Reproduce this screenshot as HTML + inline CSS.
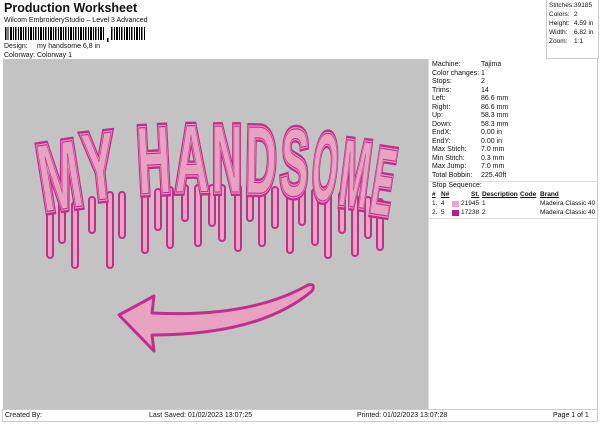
<!DOCTYPE html>
<html><head><meta charset="utf-8"><style>
*{margin:0;padding:0;box-sizing:border-box}
body{width:600px;height:424px;background:#fff;position:relative;overflow:hidden;font-family:"Liberation Sans",sans-serif;color:#111}
.a{position:absolute;white-space:nowrap}
.s{font-size:7px}
#canvas{position:absolute;left:3px;top:59px;width:425px;height:350px;background:#c3c3c3}
#panel{position:absolute;left:428px;top:59px;width:170px;height:350px;border-left:1px solid #ddd;border-right:1px solid #ccc}
#stats{position:absolute;left:546px;top:0;width:53px;height:59px;border:1px solid #ccc;border-top:none}
#foot{position:absolute;left:2px;top:409px;width:596px;height:13px;border:1px solid #ccc}
.r{position:absolute;left:3px;font-size:7px;white-space:nowrap}
.v{position:absolute;left:52px;font-size:7px;white-space:nowrap}
#stats .r{font-size:6.5px}
#tbl .r{font-size:6.5px}
</style></head><body>
<div class="a" style="left:4px;top:1px;font-size:12.5px;font-weight:bold">Production Worksheet</div>
<div class="a s" style="left:4px;top:17px">Wilcom EmbroideryStudio – Level 3 Advanced</div>
<svg class="a" style="left:4px;top:27px" width="142" height="16">
<g fill="#000">
<rect x="1" y="0" width="1.5" height="13"/><rect x="3.5" y="0" width="1" height="13"/><rect x="6" y="0" width="2" height="13"/><rect x="9" y="0" width="1" height="13"/><rect x="11" y="0" width="1.5" height="13"/><rect x="14" y="0" width="1" height="13"/><rect x="16" y="0" width="2" height="13"/><rect x="19" y="0" width="1" height="13"/><rect x="21" y="0" width="1.5" height="13"/><rect x="24" y="0" width="1" height="13"/><rect x="26" y="0" width="2" height="13"/><rect x="29" y="0" width="1" height="13"/><rect x="31" y="0" width="1.5" height="13"/><rect x="34" y="0" width="1" height="13"/><rect x="36" y="0" width="2" height="13"/><rect x="39" y="0" width="1" height="13"/><rect x="41" y="0" width="1.5" height="13"/><rect x="44" y="0" width="1" height="13"/><rect x="46" y="0" width="2" height="13"/><rect x="49" y="0" width="1" height="13"/><rect x="51" y="0" width="1.5" height="13"/><rect x="54" y="0" width="1" height="13"/><rect x="56" y="0" width="2" height="13"/><rect x="59" y="0" width="1" height="13"/><rect x="61" y="0" width="1.5" height="13"/><rect x="64" y="0" width="1" height="13"/><rect x="66" y="0" width="2" height="13"/><rect x="69" y="0" width="1" height="13"/><rect x="71" y="0" width="1.5" height="13"/><rect x="74" y="0" width="1" height="13"/><rect x="76" y="0" width="2" height="13"/><rect x="79" y="0" width="1" height="13"/><rect x="81" y="0" width="1.5" height="13"/><rect x="84" y="0" width="1" height="13"/><rect x="86" y="0" width="2" height="13"/><rect x="89" y="0" width="1" height="13"/><rect x="91" y="0" width="1.5" height="13"/><rect x="94" y="0" width="1" height="13"/><rect x="96" y="0" width="2" height="13"/><rect x="99" y="0" width="1" height="13"/>
<rect x="103" y="11" width="1.5" height="4"/>
<rect x="107" y="0" width="1.5" height="13"/><rect x="110" y="0" width="1" height="13"/><rect x="112" y="0" width="2" height="13"/><rect x="115" y="0" width="1" height="13"/><rect x="117" y="0" width="1.5" height="13"/><rect x="120" y="0" width="1" height="13"/><rect x="122" y="0" width="2" height="13"/><rect x="125" y="0" width="1" height="13"/><rect x="127" y="0" width="1.5" height="13"/><rect x="130" y="0" width="1" height="13"/><rect x="132" y="0" width="2" height="13"/><rect x="135" y="0" width="1" height="13"/><rect x="137" y="0" width="1.5" height="13"/><rect x="140" y="0" width="1" height="13"/>
</g></svg>
<div class="a s" style="left:4px;top:43px">Design:</div><div class="a s" style="left:37px;top:43px">my handsome 6,8 in</div>
<div class="a s" style="left:4px;top:52px">Colorway:</div><div class="a s" style="left:37px;top:52px">Colorway 1</div>

<div id="stats">
<div class="r" style="left:2px;top:2px">Stitches:</div><div class="r" style="left:27px;top:2px">39185</div>
<div class="r" style="left:2px;top:11px">Colors:</div><div class="r" style="left:27px;top:11px">2</div>
<div class="r" style="left:2px;top:20px">Height:</div><div class="r" style="left:27px;top:20px">4.59 in</div>
<div class="r" style="left:2px;top:29px">Width:</div><div class="r" style="left:27px;top:29px">6.82 in</div>
<div class="r" style="left:2px;top:38px">Zoom:</div><div class="r" style="left:27px;top:38px">1:1</div>
</div>

<div id="canvas">
<svg width="425" height="350" viewBox="3 59 425 350">
<g fill="none" stroke-linecap="round">
<g stroke="#c02f8c" stroke-width="8">
<path d="M50 200 v55 M62 205 v35 M75 205 v60 M92 200 v30 M110 195 v70 M122 195 v40 M145 190 v60 M158 192 v35 M170 190 v55 M185 188 v30 M198 188 v55 M212 188 v35 M222 188 v50 M238 188 v60 M250 188 v30 M262 188 v55 M275 190 v35 M290 190 v60 M302 192 v30 M315 192 v50 M328 195 v60 M342 195 v35 M355 198 v55 M368 200 v35 M380 202 v45"/>
</g>
<g stroke="#e7a3c1" stroke-width="4">
<path d="M50 200 v55 M62 205 v35 M75 205 v60 M92 200 v30 M110 195 v70 M122 195 v40 M145 190 v60 M158 192 v35 M170 190 v55 M185 188 v30 M198 188 v55 M212 188 v35 M222 188 v50 M238 188 v60 M250 188 v30 M262 188 v55 M275 190 v35 M290 190 v60 M302 192 v30 M315 192 v50 M328 195 v60 M342 195 v35 M355 198 v55 M368 200 v35 M380 202 v45"/>
</g>
</g>
<defs>
<g id="txt">
<text transform="translate(44 212) rotate(-9) scale(1,1.6)" textLength="42" lengthAdjust="spacingAndGlyphs">M</text>
<text transform="translate(87 201) rotate(-6) scale(1,1.6)" textLength="32" lengthAdjust="spacingAndGlyphs">Y</text>
<text transform="translate(139 194) rotate(-3) scale(1,1.6)" textLength="33" lengthAdjust="spacingAndGlyphs">H</text>
<text transform="translate(175 192) rotate(-1) scale(1,1.6)" textLength="34" lengthAdjust="spacingAndGlyphs">A</text>
<text transform="translate(212 192) scale(1,1.6)" textLength="30" lengthAdjust="spacingAndGlyphs">N</text>
<text transform="translate(245 193) rotate(1) scale(1,1.6)" textLength="31" lengthAdjust="spacingAndGlyphs">D</text>
<text transform="translate(279 195) rotate(3) scale(1,1.6)" textLength="28" lengthAdjust="spacingAndGlyphs">S</text>
<text transform="translate(310 199) rotate(5) scale(1,1.6)" textLength="25" lengthAdjust="spacingAndGlyphs">O</text>
<text transform="translate(337 205) rotate(7) scale(1,1.6)" textLength="29" lengthAdjust="spacingAndGlyphs">M</text>
<text transform="translate(368 213) rotate(9) scale(1,1.6)" textLength="21" lengthAdjust="spacingAndGlyphs">E</text>
</g>
</defs>
<g font-family="Liberation Sans" font-weight="bold" font-size="60" stroke-linejoin="miter">
<use href="#txt" fill="#c02f8c" stroke="#c02f8c" stroke-width="5"/>
<use href="#txt" fill="#e7a3c1" stroke="#e7a3c1" stroke-width="2"/>
<use href="#txt" fill="none" stroke="#c02f8c" stroke-width="0.7"/>
</g>
<path d="M119 315 L154 296 L152 313 Q250 318 308 285 Q316 283 312 291 Q260 335 152 335 L154 351 Z" fill="#e7a3c1" stroke="#c02f8c" stroke-width="3" stroke-linejoin="round"/>
</svg>
</div>

<div id="panel">
<div class="r" style="top:2px">Machine:</div><div class="v" style="top:2px">Tajima</div>
<div class="r" style="top:10.5px">Color changes:</div><div class="v" style="top:10.5px">1</div>
<div class="r" style="top:19px">Stops:</div><div class="v" style="top:19px">2</div>
<div class="r" style="top:27.5px">Trims:</div><div class="v" style="top:27.5px">14</div>
<div class="r" style="top:36px">Left:</div><div class="v" style="top:36px">86.6 mm</div>
<div class="r" style="top:44.5px">Right:</div><div class="v" style="top:44.5px">86.6 mm</div>
<div class="r" style="top:53px">Up:</div><div class="v" style="top:53px">58.3 mm</div>
<div class="r" style="top:61.5px">Down:</div><div class="v" style="top:61.5px">58.3 mm</div>
<div class="r" style="top:70px">EndX:</div><div class="v" style="top:70px">0.00 in</div>
<div class="r" style="top:78.5px">EndY:</div><div class="v" style="top:78.5px">0.00 in</div>
<div class="r" style="top:87px">Max Stitch:</div><div class="v" style="top:87px">7.0 mm</div>
<div class="r" style="top:95.5px">Min Stitch:</div><div class="v" style="top:95.5px">0.3 mm</div>
<div class="r" style="top:104px">Max Jump:</div><div class="v" style="top:104px">7.0 mm</div>
<div class="r" style="top:112.5px">Total Bobbin:</div><div class="v" style="top:112.5px">225.40ft</div>
<div style="position:absolute;left:0;top:122px;width:169px;border-top:1px solid #ddd"></div>
<div class="r" style="top:123px">Stop Sequence:</div>
<div id="tbl">
<div class="r" style="top:132px;font-weight:bold;text-decoration:underline">#</div>
<div class="r" style="left:12px;top:132px;font-weight:bold;text-decoration:underline">N#</div>
<div class="r" style="left:42px;top:132px;font-weight:bold;text-decoration:underline">St.</div>
<div class="r" style="left:53px;top:132px;font-weight:bold;text-decoration:underline">Description</div>
<div class="r" style="left:91px;top:132px;font-weight:bold;text-decoration:underline">Code</div>
<div class="r" style="left:111px;top:132px;font-weight:bold;text-decoration:underline">Brand</div>
<div class="r" style="top:141px">1.&nbsp; 4</div><div style="position:absolute;left:23px;top:142px;width:7px;height:6px;background:#f3a3c9"></div><div class="r" style="left:32px;top:141px">21945</div><div class="r" style="left:53px;top:141px">1</div><div class="r" style="left:111px;top:141px">Madeira Classic 40</div>
<div class="r" style="top:150px">2.&nbsp; 5</div><div style="position:absolute;left:23px;top:151px;width:7px;height:6px;background:#c0188a"></div><div class="r" style="left:32px;top:150px">17238</div><div class="r" style="left:53px;top:150px">2</div><div class="r" style="left:111px;top:150px">Madeira Classic 40</div>
</div>
<div style="position:absolute;left:0;top:159px;width:169px;border-top:1px solid #ddd"></div>
</div>

<div id="foot">
<div class="r" style="left:2px;top:2px">Created By:</div>
<div class="r" style="left:146px;top:2px">Last Saved: 01/02/2023 13:07:25</div>
<div class="r" style="left:354px;top:2px">Printed: 01/02/2023 13:07:28</div>
<div class="r" style="left:550px;top:2px">Page 1 of 1</div>
</div>
</body></html>
